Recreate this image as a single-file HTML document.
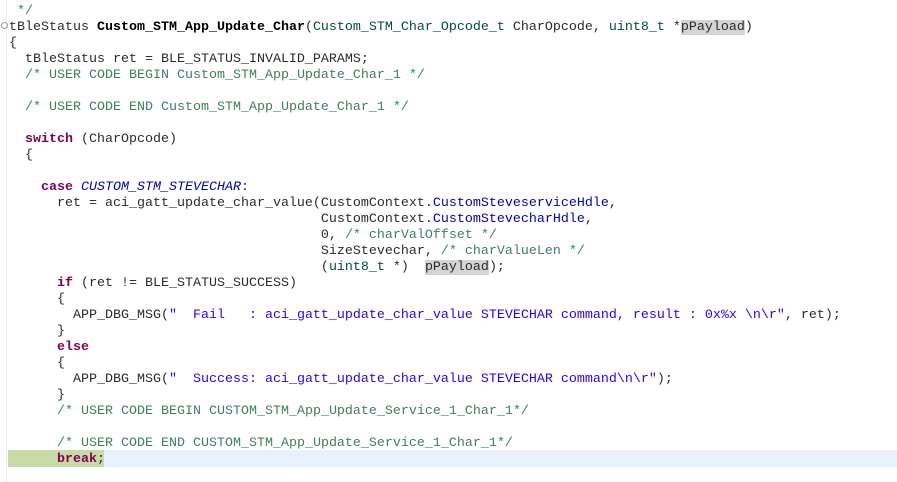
<!DOCTYPE html>
<html><head><style>
body{margin:0;width:897px;height:482px;background:#fff;overflow:hidden;position:relative}
pre{margin:0;position:absolute;left:9px;top:4px;font-family:"Liberation Mono",monospace;font-size:13.33px;line-height:16px;color:#2b2b2b}
.k{color:#7f0055;font-weight:bold}.c{color:#3f7f5f}.s{color:#2a00ff}.f{color:#0000c0}.i{color:#0000c0;font-style:italic}.t{color:#005032}.b{font-weight:bold;color:#000}.h{background:#d4d4d4}
.hl{position:absolute;left:8px;top:450px;width:889px;height:17px;background:#e8f2fe}
.hg{position:absolute;left:8px;top:450px;width:96px;height:17px;background:#c7dba5}
.gut{position:absolute;left:6px;top:0;width:1px;height:482px;background:#eee}
.fold{position:absolute;left:1px;top:22px;width:5px;height:5px;border:1px solid #999;border-radius:50%}
</style></head><body>
<div class="gut"></div><div class="fold"></div>
<div class="hl"></div><div class="hg"></div>
<pre><span class="c"> */</span>
tBleStatus <span class="b">Custom_STM_App_Update_Char</span>(<span class="t">Custom_STM_Char_Opcode_t</span> CharOpcode, <span class="t">uint8_t</span> *<span class="h">pPayload</span>)
{
  tBleStatus ret = BLE_STATUS_INVALID_PARAMS;
  <span class="c">/* USER CODE BEGIN Custom_STM_App_Update_Char_1 */</span>

  <span class="c">/* USER CODE END Custom_STM_App_Update_Char_1 */</span>

  <span class="k">switch</span> (CharOpcode)
  {

    <span class="k">case</span> <span class="i">CUSTOM_STM_STEVECHAR</span>:
      ret = aci_gatt_update_char_value(CustomContext.<span class="f">CustomSteveserviceHdle</span>,
                                       CustomContext.<span class="f">CustomStevecharHdle</span>,
                                       0, <span class="c">/* charValOffset */</span>
                                       SizeStevechar, <span class="c">/* charValueLen */</span>
                                       (<span class="t">uint8_t</span> *)  <span class="h">pPayload</span>);
      <span class="k">if</span> (ret != BLE_STATUS_SUCCESS)
      {
        APP_DBG_MSG(<span class="s">"  Fail   : aci_gatt_update_char_value STEVECHAR command, result : 0x%x \n\r"</span>, ret);
      }
      <span class="k">else</span>
      {
        APP_DBG_MSG(<span class="s">"  Success: aci_gatt_update_char_value STEVECHAR command\n\r"</span>);
      }
      <span class="c">/* USER CODE BEGIN CUSTOM_STM_App_Update_Service_1_Char_1*/</span>

      <span class="c">/* USER CODE END CUSTOM_STM_App_Update_Service_1_Char_1*/</span>
      <span class="k">break</span>;
</pre>
</body></html>
